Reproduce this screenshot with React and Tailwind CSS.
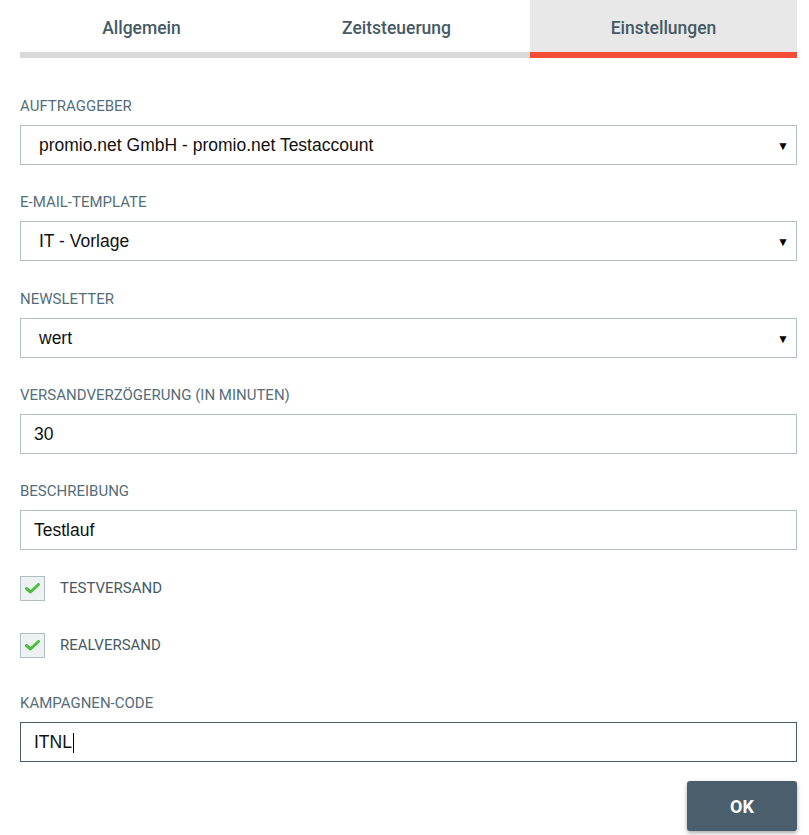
import React from 'react';

const tabs = [
  { name: 'Allgemein', w: 'w-[243px]' },
  { name: 'Zeitsteuerung', w: 'w-[267px]' },
  { name: 'Einstellungen', w: 'flex-1', active: true },
];

function Label({ children }) {
  return (
    <div className="h-[20px] leading-[20px] mb-[9px] text-[15px] text-[#546e7a] font-['Roboto',sans-serif] uppercase">
      {children}
    </div>
  );
}

function Select({ value }) {
  return (
    <div className="h-[40px] pt-[1px] border border-[#b0bec5] bg-white flex items-center pl-[18px] pr-[7px] font-['Liberation_Sans',Arial,sans-serif] text-[17.5px] text-[#111]">
      <span className="flex-1">{value}</span>
      <span className="text-[12px] text-black leading-none">▼</span>
    </div>
  );
}

function TextInput({ value, focused }) {
  return (
    <div className={'h-[40px] pt-[1px] border bg-white flex items-center pl-[13px] font-[\'Liberation_Sans\',Arial,sans-serif] text-[17.5px] text-[#111] ' + (focused ? 'border-[#455a64]' : 'border-[#b0bec5]')}>
      <span>{value}</span>
      {focused && <span className="w-[1px] h-[20px] bg-black ml-[1px]"></span>}
    </div>
  );
}

function Check({ label }) {
  return (
    <div className="flex items-center h-[25px]">
      <div className="w-[25px] h-[25px] border border-[#b0bec5] bg-[#eef1f1] flex items-center justify-center">
        <svg width="15" height="11" viewBox="0 0 15 11">
          <path d="M1.5 5.5 L5.5 9 L13.5 1.5" fill="none" stroke="#4cbf3a" strokeWidth="3" strokeLinecap="round" strokeLinejoin="round" />
        </svg>
      </div>
      <span className="ml-[15px] text-[15px] text-[#455a64] font-['Roboto',sans-serif]">{label}</span>
    </div>
  );
}

export default function App() {
  return (
    <div className="bg-white w-[809px] h-[835px] pl-[20px] pr-[12px] font-['Roboto',sans-serif]">
      <div className="flex">
        {tabs.map((t) => (
          <div
            key={t.name}
            className={
              t.w + ' h-[58px] pt-[4px] flex items-center justify-center border-b-[6px] text-[17.5px] font-medium text-[#455a64] ' +
              (t.active ? 'bg-[#e8e8e8] border-[#f44d37]' : 'border-[#d9d9d9]')
            }
          >
            {t.name}
          </div>
        ))}
      </div>

      <div className="pt-[38px]">
        <Label>Auftraggeber</Label>
        <Select value="promio.net GmbH - promio.net Testaccount" />
        <div className="h-[27px]"></div>

        <Label>E-Mail-Template</Label>
        <Select value="IT - Vorlage" />
        <div className="h-[28px]"></div>

        <Label>Newsletter</Label>
        <Select value="wert" />
        <div className="h-[27px]"></div>

        <Label>Versandverzögerung (in Minuten)</Label>
        <TextInput value="30" />
        <div className="h-[27px]"></div>

        <Label>Beschreibung</Label>
        <TextInput value="Testlauf" />

        <div className="mt-[26px] flex flex-col gap-[32px]">
          <Check label="TESTVERSAND" />
          <Check label="REALVERSAND" />
        </div>

        <div className="mt-[35px]">
          <Label>Kampagnen-Code</Label>
          <TextInput value="ITNL" focused />
        </div>

        <div className="flex justify-end mt-[19px]">
          <button className="w-[110px] h-[50px] rounded-[3px] bg-[#4a5f6b] text-white text-[18px] font-bold shadow-[0_2px_4px_rgba(0,0,0,0.35)] font-['Roboto',sans-serif]">
            OK
          </button>
        </div>
      </div>
    </div>
  );
}
